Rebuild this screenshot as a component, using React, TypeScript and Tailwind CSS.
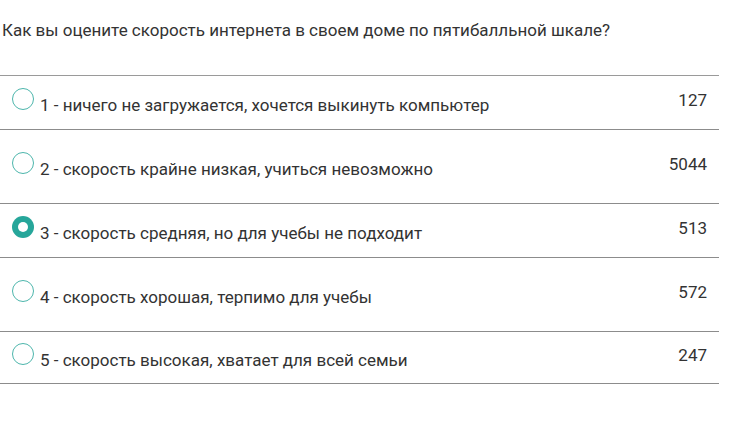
import React from 'react';

const options = [
  { label: '1 - ничего не загружается, хочется выкинуть компьютер', count: 127, h: 'h-[54px]' },
  { label: '2 - скорость крайне низкая, учиться невозможно', count: 5044, h: 'h-[74px]' },
  { label: '3 - скорость средняя, но для учебы не подходит', count: 513, h: 'h-[54px]' },
  { label: '4 - скорость хорошая, терпимо для учебы', count: 572, h: 'h-[74px]' },
  { label: '5 - скорость высокая, хватает для всей семьи', count: 247, h: 'h-[52px]' },
];

const App: React.FC = () => {
  const selected = 2;

  return (
    <div
      className="min-h-screen bg-white text-[#333] pt-[20px]"
      style={{ fontFamily: 'Roboto, "Noto Sans", sans-serif' }}
    >
      <div className="w-[719px]">
        {/* Question */}
        <p className="pl-[2px] text-[17px] leading-[20px] h-[55px]">
          Как вы оцените скорость интернета в своем доме по пятибалльной шкале?
        </p>

        {/* Options */}
        <div className="border-t border-[#9a9a9a]">
          {options.map((o, i) => (
            <div
              key={i}
              className={`flex items-center justify-between border-b border-[#8c8c8c] ${o.h}`}
            >
              <div className="flex items-center pl-[12px]">
                {i === selected ? (
                  <span className="mb-[8px] w-[22px] h-[22px] rounded-full bg-[#26a69a] flex items-center justify-center shrink-0">
                    <span className="w-[10px] h-[10px] rounded-full bg-white" />
                  </span>
                ) : (
                  <span className="mb-[8px] w-[22px] h-[22px] rounded-full border-[1.5px] border-[#4db6ac] shrink-0" />
                )}
                <span className="mt-[4px] ml-[6px] text-[17px] leading-[20px]">{o.label}</span>
              </div>
              <span className="mb-[6px] pr-[12px] text-[17px] leading-[20px]">{o.count}</span>
            </div>
          ))}
        </div>
      </div>
    </div>
  );
};

export default App;
